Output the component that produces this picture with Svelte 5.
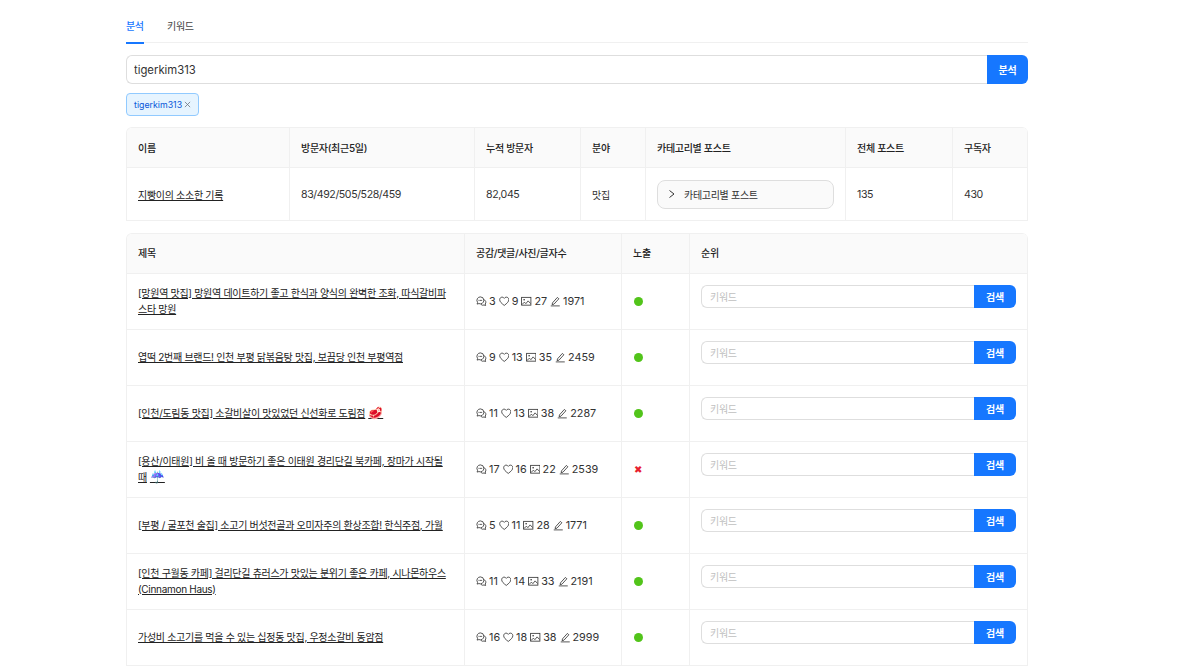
<script lang="ts">
  // 분석 결과 화면 목업
  const blog = {
    name: "지빵이의 소소한 기록",
    visitors: "83/492/505/528/459",
    total: "82,045",
    field: "맛집",
    posts: 135,
    subs: 430,
  };

  const rows = [
    { title: "[망원역 맛집] 망원역 데이트하기 좋고 한식과 양식의 완벽한 조화, 따식갈비파스타 망원", emoji: "", c: 3, l: 9, p: 27, w: 1971, ok: true },
    { title: "엽떡 2번째 브랜드! 인천 부평 닭볶음탕 맛집, 보끔당 인천 부평역점", emoji: "", c: 9, l: 13, p: 35, w: 2459, ok: true },
    { title: "[인천/도림동 맛집] 소갈비살이 맛있었던 신선화로 도림점", emoji: "🥩", c: 11, l: 13, p: 38, w: 2287, ok: true },
    { title: "[용산/이태원] 비 올 때 방문하기 좋은 이태원 경리단길 북카페, 장마가 시작될 때", emoji: "☔️", c: 17, l: 16, p: 22, w: 2539, ok: false },
    { title: "[부평 / 굴포천 술집] 소고기 버섯전골과 오미자주의 환상조합! 한식주점, 가월", emoji: "", c: 5, l: 11, p: 28, w: 1771, ok: true },
    { title: "[인천 구월동 카페] 걸리단길 츄러스가 맛있는 분위기 좋은 카페, 시나몬하우스 (Cinnamon Haus)", emoji: "", c: 11, l: 14, p: 33, w: 2191, ok: true },
    { title: "가성비 소고기를 먹을 수 있는 십정동 맛집, 우정소갈비 동암점", emoji: "", c: 16, l: 18, p: 38, w: 2999, ok: true },
  ];
</script>

<div class="page">
  <div class="tabs">
    <span class="tab active">분석</span>
    <span class="tab">키워드</span>
  </div>

  <div class="search">
    <input class="search-input" value="tigerkim313" />
    <button class="search-btn">분석</button>
  </div>

  <div class="tags">
    <span class="tag">
      tigerkim313
      <svg width="7" height="7" viewBox="0 0 8 8"><path d="M1 1l6 6M7 1L1 7" stroke="#6b7480" stroke-width="0.9" fill="none" /></svg>
    </span>
  </div>

  <div class="card">
    <table class="info">
      <thead>
        <tr>
          <th class="i1">이름</th>
          <th class="i2">방문자(최근5일)</th>
          <th class="i3">누적 방문자</th>
          <th class="i4">분야</th>
          <th class="i5">카테고리별 포스트</th>
          <th class="i6">전체 포스트</th>
          <th class="i7">구독자</th>
        </tr>
      </thead>
      <tbody>
        <tr>
          <td><span class="link">{blog.name}</span></td>
          <td class="val">{blog.visitors}</td>
          <td class="val">{blog.total}</td>
          <td class="ko">{blog.field}</td>
          <td>
            <div class="collapse">
              <svg width="8" height="10" viewBox="0 0 8 10"><path d="M1.500 1.500l4.500 3.500-4.500 3.500" stroke="#333" stroke-width="1" fill="none" /></svg>
              <span>카테고리별 포스트</span>
            </div>
          </td>
          <td class="val">{blog.posts}</td>
          <td class="val">{blog.subs}</td>
        </tr>
      </tbody>
    </table>
  </div>

  <div class="card second">
    <table class="posts">
      <thead>
        <tr>
          <th class="p1">제목</th>
          <th class="p2">공감/댓글/사진/글자수</th>
          <th class="p3">노출</th>
          <th>순위</th>
        </tr>
      </thead>
      <tbody>
        {#each rows as row}
          <tr>
            <td class="title-cell"><span class="link">{row.title}{#if row.emoji}<span class="emoji">{row.emoji}</span>{/if}</span></td>
            <td>
              <div class="stats">
                <svg class="ico" viewBox="0 0 14 14"><path d="M5.800 1.200a4.600 4.600 0 0 0-3.700 7.300L1.500 10.800l2.400-.7a4.600 4.600 0 0 0 6.500-4.300 4.600 4.600 0 0 0-4.600-4.600z M10.800 5a3.600 3.600 0 0 1 1.500 5.700l.5 2-2.100-.7a3.700 3.700 0 0 1-4.200-.9" fill="none" stroke="#333" stroke-width="1.100" /><circle cx="4" cy="5.800" r=".7" fill="#333" /><circle cx="5.800" cy="5.800" r=".7" fill="#333" /><circle cx="7.600" cy="5.800" r=".7" fill="#333" /></svg>
                <span class="num">{row.c}</span>
                <svg class="ico" viewBox="0 0 14 14"><path d="M7 12.600C3.400 9.800.9 7.600.9 4.900.9 2.900 2.500 1.500 4.200 1.500 5.400 1.500 6.400 2.100 7 3.200 7.600 2.100 8.600 1.500 9.800 1.500c1.700 0 3.300 1.400 3.300 3.400 0 2.700-2.500 4.900-6.100 7.700z" fill="none" stroke="#333" stroke-width="1.100" /></svg>
                <span class="num">{row.l}</span>
                <svg class="ico" viewBox="0 0 14 14"><rect x=".8" y="1.800" width="12.400" height="10.400" fill="none" stroke="#333" stroke-width="1.100" /><circle cx="4.200" cy="5" r="1.100" fill="#333" /><path d="M1.200 11.500l3.300-3.300 2 2 3-3.700 3.300 3.600" fill="none" stroke="#333" stroke-width="1.100" /></svg>
                <span class="num">{row.p}</span>
                <svg class="ico" viewBox="0 0 14 14"><path d="M3.300 9.200L9.800 1.900l2 1.800-6.500 7.200-2.500.6zM1 13.200h12" fill="none" stroke="#333" stroke-width="1.100" /></svg>
                <span class="num">{row.w}</span>
              </div>
            </td>
            <td>
              {#if row.ok}
                <span class="dot"></span>
              {:else}
                <span class="cross">✖</span>
              {/if}
            </td>
            <td>
              <div class="rank">
                <input class="rank-input" placeholder="키워드" />
                <button class="rank-btn">검색</button>
              </div>
            </td>
          </tr>
        {/each}
      </tbody>
    </table>
  </div>
</div>

<style>
  :global(body) {
    margin: 0;
    background: #fff;
    font-family: Inter, "Noto Sans CJK KR", "Liberation Sans", sans-serif;
    color: rgba(0, 0, 0, 0.88);
    overflow: hidden;
  }

  .page {
    width: 902px;
    margin-left: 126px;
    height: 667px;
    overflow: hidden;
    font-size: 10px;
  }

  .tabs {
    display: flex;
    gap: 23.500px;
    height: 42px;
    border-bottom: 1px solid #f0f0f0;
    letter-spacing: -0.4px;
  }

  .tab {
    padding-top: 20px;
    height: 22px;
    line-height: 13px;
    color: #444;
  }

  .tab.active {
    color: #1677ff;
    font-weight: 500;
    border-bottom: 2px solid #1677ff;
  }

  .search {
    display: flex;
    margin-top: 12px;
    height: 29px;
  }

  .search-input {
    flex: 1;
    min-width: 0;
    box-sizing: border-box;
    height: 29px;
    border: 1px solid #dedede;
    border-right: 0;
    border-radius: 6px 0 0 6px;
    padding: 0 7px;
    font: inherit;
    font-size: 11.3px;
    color: #333;
    outline: none;
  }

  .search-btn {
    width: 41px;
    height: 29px;
    border: 0;
    border-radius: 0 6px 6px 0;
    background: #1677ff;
    color: #fff;
    font: inherit;
    font-weight: 600;
    letter-spacing: -0.3px;
    padding: 0;
  }

  .tags {
    display: flex;
    margin-top: 9px;
  }

  .tag {
    display: inline-flex;
    align-items: center;
    gap: 2px;
    height: 23px;
    box-sizing: border-box;
    padding: 0 7px;
    background: #e6f4ff;
    border: 1px solid #91caff;
    border-radius: 4px;
    color: #0958d9;
    font-size: 8.8px;
  }

  .card {
    margin-top: 11px;
    border-top: 1px solid #f0f0f0;
    border-left: 1px solid #f0f0f0;
    border-radius: 6px 6px 0 0;
    overflow: hidden;
  }

  .card.second {
    margin-top: 12px;
  }

  table {
    width: 100%;
    border-collapse: separate;
    border-spacing: 0;
    table-layout: fixed;
  }

  th {
    background: #fafafa;
    font-weight: 500;
    text-align: left;
    height: 40px;
    padding: 0 11px;
    color: #222;
    letter-spacing: -0.3px;
    border-right: 1px solid #f0f0f0;
    border-bottom: 1px solid #f0f0f0;
    box-sizing: border-box;
  }

  .posts th {
    padding-bottom: 2px;
  }

  td {
    padding: 0 11px;
    border-right: 1px solid #f0f0f0;
    border-bottom: 1px solid #f0f0f0;
    box-sizing: border-box;
    color: #333;
  }

  .val {
    font-size: 10.6px;
    letter-spacing: -0.4px;
  }

  .ko {
    letter-spacing: -0.3px;
  }

  .info td {
    height: 53px;
  }

  .posts td {
    height: 56px;
    line-height: 16px;
  }

  .posts .title-cell {
    padding-bottom: 2px;
  }

  .i1 { width: 163px; }
  .i2 { width: 185px; }
  .i3 { width: 106px; }
  .i4 { width: 65px; }
  .i5 { width: 200px; }
  .i6 { width: 107px; }

  .p1 { width: 338px; }
  .p2 { width: 157px; }
  .p3 { width: 68px; }

  .link {
    color: #222;
    text-decoration: underline;
    letter-spacing: -0.3px;
  }

  .emoji {
    font-family: "Noto Color Emoji", sans-serif;
    font-size: 12px;
    letter-spacing: 0;
    margin-left: 3px;
  }

  .collapse {
    display: flex;
    align-items: center;
    gap: 8px;
    height: 29px;
    box-sizing: border-box;
    padding-left: 10px;
    background: #fafafa;
    border: 1px solid #dedede;
    border-radius: 8px;
    letter-spacing: -0.3px;
  }

  .stats {
    display: flex;
    align-items: center;
    gap: 2.500px;
    font-size: 10.8px;
  }

  .ico {
    width: 10.5px;
    height: 10.5px;
    flex: none;
  }

  .num {
    margin-right: 0.5px;
  }

  .dot {
    display: block;
    width: 9px;
    height: 9px;
    margin-left: 1px;
    border-radius: 50%;
    background: #52c41a;
  }

  .cross {
    color: #e8202e;
    font-size: 10px;
    margin-left: 1px;
    font-family: "DejaVu Sans", sans-serif;
  }

  .rank {
    display: flex;
    height: 23px;
    margin-bottom: 10px;
  }

  .rank-input {
    flex: 1;
    min-width: 0;
    box-sizing: border-box;
    height: 23px;
    border: 1px solid #dedede;
    border-right: 0;
    border-radius: 6px 0 0 6px;
    padding: 0 8px;
    font: inherit;
    letter-spacing: -0.3px;
    outline: none;
  }

  .rank-input::placeholder {
    color: #bfbfbf;
  }

  .rank-btn {
    width: 42px;
    height: 23px;
    border: 0;
    border-radius: 0 6px 6px 0;
    background: #1677ff;
    color: #fff;
    font: inherit;
    font-weight: 600;
    letter-spacing: -0.3px;
    padding: 0;
  }
</style>
